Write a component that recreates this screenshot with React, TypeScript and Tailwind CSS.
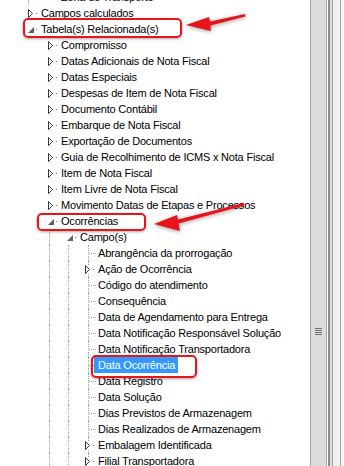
type Kind = "leaf" | "closed" | "open";

type Row = {
  text: string;
  level: number;
  kind: Kind;
  guides?: number[];
  selected?: boolean;
};

const SUB = [49, 68, 88];

const ROWS: Row[] = [
  { text: "Zona de Transporte", level: 2, kind: "leaf", guides: [28] },
  { text: "Campos calculados", level: 1, kind: "closed" },
  { text: "Tabela(s) Relacionada(s)", level: 1, kind: "open" },
  { text: "Compromisso", level: 2, kind: "closed" },
  { text: "Datas Adicionais de Nota Fiscal", level: 2, kind: "closed" },
  { text: "Datas Especiais", level: 2, kind: "closed" },
  { text: "Despesas de Item de Nota Fiscal", level: 2, kind: "closed" },
  { text: "Documento Contábil", level: 2, kind: "closed" },
  { text: "Embarque de Nota Fiscal", level: 2, kind: "closed" },
  { text: "Exportação de Documentos", level: 2, kind: "closed" },
  { text: "Guia de Recolhimento de ICMS x Nota Fiscal", level: 2, kind: "closed" },
  { text: "Item de Nota Fiscal", level: 2, kind: "closed" },
  { text: "Item Livre de Nota Fiscal", level: 2, kind: "closed" },
  { text: "Movimento Datas de Etapas e Processos", level: 2, kind: "closed" },
  { text: "Ocorrências", level: 2, kind: "open" },
  { text: "Campo(s)", level: 3, kind: "open", guides: [49] },
  { text: "Abrangência da prorrogação", level: 4, kind: "leaf", guides: SUB },
  { text: "Ação de Ocorrência", level: 4, kind: "closed", guides: SUB },
  { text: "Código do atendimento", level: 4, kind: "leaf", guides: SUB },
  { text: "Consequência", level: 4, kind: "leaf", guides: SUB },
  { text: "Data de Agendamento para Entrega", level: 4, kind: "leaf", guides: SUB },
  { text: "Data Notificação Responsável Solução", level: 4, kind: "leaf", guides: SUB },
  { text: "Data Notificação Transportadora", level: 4, kind: "leaf", guides: SUB },
  { text: "Data Ocorrência", level: 4, kind: "leaf", guides: SUB, selected: true },
  { text: "Data Registro", level: 4, kind: "leaf", guides: SUB },
  { text: "Data Solução", level: 4, kind: "leaf", guides: SUB },
  { text: "Dias Previstos de Armazenagem", level: 4, kind: "leaf", guides: SUB },
  { text: "Dias Realizados de Armazenagem", level: 4, kind: "leaf", guides: SUB },
  { text: "Embalagem Identificada", level: 4, kind: "closed", guides: SUB },
  { text: "Filial Transportadora", level: 4, kind: "closed", guides: SUB },
];

const NODE_PAD: Record<number, string> = {
  1: "pl-[28px]",
  2: "pl-[48px]",
  3: "pl-[67px]",
  4: "pl-[85px]",
};

const GUIDE_LEFT: Record<number, string> = {
  28: "left-[28px]",
  49: "left-[49px]",
  68: "left-[68px]",
  88: "left-[88px]",
};

const Expander = ({ open }: { open: boolean }) => (
  <span className="flex w-[7px] shrink-0 items-center bg-white">
    {open ? (
      <svg width="6" height="6" viewBox="0 0 6 6" className="mt-[1px]">
        <polygon points="6,0 6,6 0,6" fill="#5e5e5e" />
      </svg>
    ) : (
      <svg width="6" height="9" viewBox="0 0 6 9">
        <polygon points="0.5,0.5 4.5,4.5 0.5,8.5" fill="#fff" stroke="#3a3a3a" strokeWidth="1" />
      </svg>
    )}
  </span>
);

const TreeRow = ({ row }: { row: Row }) => {
  const guides = row.guides ?? [];
  return (
    <div className="relative flex h-4 items-center whitespace-nowrap">
      {guides.map((g) => (
        <span
          key={g}
          className={`absolute top-0 bottom-0 w-0 border-l border-dotted border-[#a0a0a0] ${GUIDE_LEFT[g]}`}
        />
      ))}

      {row.kind === "leaf" && row.level === 4 ? (
        <div className="relative flex items-center pl-[89px]">
          <span className={`h-0 border-t border-dotted border-[#a0a0a0] ${row.selected ? "w-[5px]" : "w-[7px]"}`} />
          {row.selected ? (
            <span className="bg-[#3399ff] pl-[4px] pr-[3px] text-white">{row.text}</span>
          ) : (
            <span className="ml-[2px]">{row.text}</span>
          )}
        </div>
      ) : row.kind === "leaf" ? (
        <div className="pl-[61px]">{row.text}</div>
      ) : (
        <div className={`relative flex items-center ${NODE_PAD[row.level]}`}>
          <Expander open={row.kind === "open"} />
          <span className="ml-[1px] h-px w-px bg-[#7a7a7a]" />
          <span className="ml-[4px]">{row.text}</span>
        </div>
      )}
    </div>
  );
};

export default function App() {
  return (
    <div
      className="flex h-[466px] w-[344px] overflow-hidden bg-white text-[11px] leading-4 tracking-[-0.2px] text-black"
      style={{ fontFamily: '"Liberation Sans", Arial, sans-serif' }}
    >
      {/* tree */}
      <div className="relative w-[310px] shrink-0 overflow-hidden">
        <div className="-mt-[11px]">
          {ROWS.map((r, i) => (
            <TreeRow key={i} row={r} />
          ))}
        </div>

        {/* annotations */}
        <div className="pointer-events-none absolute left-[23px] top-[18px] h-[20px] w-[159px] rounded-[5px] border-2 border-[#e8141c] shadow-[0_1px_3px_rgba(0,0,0,0.35)]" />
        <div className="pointer-events-none absolute left-[37px] top-[213px] h-[18px] w-[109px] rounded-[5px] border-2 border-[#e8141c] shadow-[0_1px_3px_rgba(0,0,0,0.35)]" />
        <div className="pointer-events-none absolute left-[91px] top-[355px] h-[23px] w-[106px] rounded-[5px] border-2 border-[#e8141c] shadow-[0_1px_3px_rgba(0,0,0,0.35)]" />
        <svg
          width="310"
          height="466"
          className="pointer-events-none absolute left-0 top-0 drop-shadow-[0_1px_2px_rgba(0,0,0,0.4)]"
        >
          <polygon points="186,25 209,17 210,21.5 245,14 245.5,16.5 210.5,25.5 211,31" fill="#e8141c" />
          <polygon points="154,224 177,215 178,219.5 244,203 244.5,205.5 178.5,223.5 180,231" fill="#e8141c" />
        </svg>
      </div>

      {/* scrollbar + frame */}
      <div className="w-px bg-[#a6a6a6]" />
      <div className="flex w-[15px] flex-col items-center bg-[#dcdcdc] pt-[328px]">
        <div className="flex flex-col gap-px">
          <span className="h-px w-[7px] bg-[#6e6e6e]" />
          <span className="h-px w-[7px] bg-[#6e6e6e]" />
          <span className="h-px w-[7px] bg-[#6e6e6e]" />
          <span className="h-px w-[7px] bg-[#6e6e6e]" />
        </div>
      </div>
      <div className="w-px bg-[#a6a6a6]" />
      <div className="w-px bg-white" />
      <div className="w-[2px] bg-[#8c8c8c]" />
      <div className="w-[2px] bg-[#dedede]" />
      <div className="w-px bg-[#a0a0a0]" />
      <div className="w-[7px] bg-[#f0f0f0]" />
      <div className="w-px bg-[#a0a0a0]" />
      <div className="w-[3px] bg-[#f7f7f7]" />
    </div>
  );
}
